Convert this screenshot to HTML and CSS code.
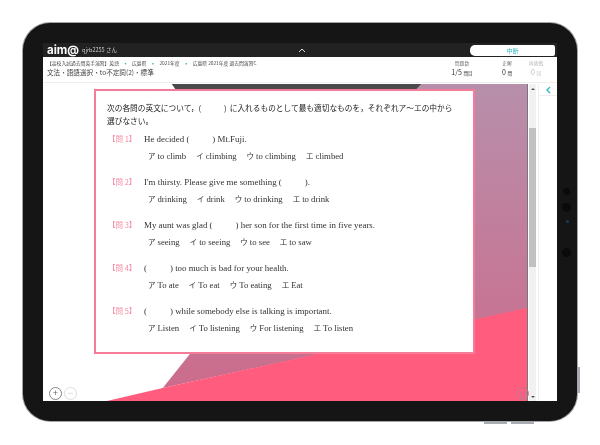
FILE: index.html
```html
<!DOCTYPE html>
<html lang="ja">
<head>
    <meta charset="UTF-8">
    <meta name="viewport" content="width=device-width, initial-scale=1.0">
    <title>aim@</title>
    <link rel="stylesheet" href="styles.css">
</head>
<body>
    <div class="tablet">
        <!-- Side buttons on the tablet edge -->
        <span class="btn-side"></span>
        <span class="btn-bottom btn-bottom-1"></span>
        <span class="btn-bottom btn-bottom-2"></span>
        <span class="dot dot-1"></span>
        <span class="dot dot-2"></span>
        <span class="dot dot-3"></span>
        <span class="dot dot-4"></span>

        <div class="screen">
            <!-- App bar -->
            <div class="appbar">
                <div class="logo">aim@</div>
                <div class="user">qjrb2255 さん</div>
                <svg class="caret" width="8" height="5" viewBox="0 0 8 5"><path d="M1 4 L4 1 L7 4" fill="none" stroke="#ddd" stroke-width="1"/></svg>
                <div class="stop">中断</div>
            </div>

            <!-- Title area -->
            <div class="info">
                <div class="info-left">
                    <div class="crumbs">【高校入試過去問英手演習】英語<i>▪</i>広島県<i>▪</i>2021年度<i>▪</i>広島県 2021年度 過去問演習C</div>
                    <div class="unit">文法・語語選択・to不定詞(2)・標準</div>
                </div>
                <div class="stat stat-1"><small>問題数</small><b>1/5 <em>問目</em></b></div>
                <div class="stat stat-2"><small>正解</small><b>0 <em>問</em></b></div>
                <div class="stat stat-3 stat-off"><small>再挑戦</small><b>0 <em>回</em></b></div>
            </div>

            <div class="main">
                <div class="canvas">
                    <svg class="bg" viewBox="0 0 485 317" preserveAspectRatio="none">
                        <defs>
                            <linearGradient id="mauve" x1="0" y1="0" x2="0" y2="1">
                                <stop offset="0" stop-color="#b78fab"/>
                                <stop offset="1" stop-color="#cc6c8c"/>
                            </linearGradient>
                        </defs>
                        <polygon points="135,0 485,0 485,225 120,304 148,269" fill="url(#mauve)"/>
                        <polygon points="129,0 379,0 360,20 143,20" fill="#4a4a4c"/>
                        <polygon points="64,317 120,304 485,224 485,317" fill="#ff5c7e"/>
                    </svg>
                    <div class="card">
                        <p class="intro">次の各問の英文について，<span class="intro-paren">(<span class="intro-blank"></span>)</span>に入れるものとして最も適切なものを，それぞれア～エの中から<br>選びなさい。</p>

                        <div class="q">
                            <div class="q-line"><span class="q-no">【問 1】</span>He decided (<span class="blank"></span>) Mt.Fuji.</div>
                            <div class="opts"><span><i>ア</i>to climb</span><span><i>イ</i>climbing</span><span><i>ウ</i>to climbing</span><span><i>エ</i>climbed</span></div>
                        </div>
                        <div class="q">
                            <div class="q-line"><span class="q-no">【問 2】</span>I'm thirsty. Please give me something (<span class="blank"></span>).</div>
                            <div class="opts"><span><i>ア</i>drinking</span><span><i>イ</i>drink</span><span><i>ウ</i>to drinking</span><span><i>エ</i>to drink</span></div>
                        </div>
                        <div class="q">
                            <div class="q-line"><span class="q-no">【問 3】</span>My aunt was glad (<span class="blank"></span>) her son for the first time in five years.</div>
                            <div class="opts"><span><i>ア</i>seeing</span><span><i>イ</i>to seeing</span><span><i>ウ</i>to see</span><span><i>エ</i>to saw</span></div>
                        </div>
                        <div class="q">
                            <div class="q-line"><span class="q-no">【問 4】</span>(<span class="blank"></span>) too much is bad for your health.</div>
                            <div class="opts"><span><i>ア</i>To ate</span><span><i>イ</i>To eat</span><span><i>ウ</i>To eating</span><span><i>エ</i>Eat</span></div>
                        </div>
                        <div class="q">
                            <div class="q-line"><span class="q-no">【問 5】</span>(<span class="blank"></span>) while somebody else is talking is important.</div>
                            <div class="opts"><span><i>ア</i>Listen</span><span><i>イ</i>To listening</span><span><i>ウ</i>For listening</span><span><i>エ</i>To listen</span></div>
                        </div>
                    </div>
                    <div class="zoom-btns">
                        <span class="zoom-btn">+</span>
                        <span class="zoom-btn zoom-off">−</span>
                    </div>
                    <span class="target"></span>
                </div>

                <div class="scrollbar">
                    <span class="arrow-up"></span>
                    <div class="thumb"></div>
                    <span class="arrow-down"></span>
                </div>

                <div class="rail">
                    <div class="rail-top">
                        <svg width="6" height="8" viewBox="0 0 6 8"><path d="M5 1 L2 4 L5 7" fill="none" stroke="#35b8c4" stroke-width="1.4"/></svg>
                    </div>
                </div>
            </div>
        </div>
    </div>
</body>
</html>
```

FILE: styles.css
```css
* {
    box-sizing: border-box;
}

body {
    margin: 0;
    width: 600px;
    height: 445px;
    overflow: hidden;
    background-color: #fff;
    font-family: "Noto Sans CJK JP", "Noto Sans", sans-serif;
    color: #333;
}

.tablet {
    position: relative;
    width: 554px;
    height: 398px;
    margin: 23px 0 0 23px;
    padding: 20px;
    background-color: #151515;
    border-radius: 27px;
    box-shadow: 0 0 0 1px #a4a6aa;
}

.btn-side {
    position: absolute;
    right: -3px;
    top: 344px;
    width: 2px;
    height: 26px;
    background-color: #a9acb2;
}

.btn-bottom {
    position: absolute;
    bottom: -3px;
    width: 23px;
    height: 2px;
    background-color: #a9acb2;
}

.btn-bottom-1 {
    left: 461px;
}

.btn-bottom-2 {
    left: 488px;
}

.dot {
    position: absolute;
    border-radius: 50%;
    background-color: #0a0a0a;
}

.dot-1 {
    top: 165px;
    left: 540px;
    width: 7px;
    height: 7px;
}

.dot-2 {
    top: 180px;
    left: 539px;
    width: 9px;
    height: 9px;
}

.dot-3 {
    top: 197px;
    left: 543px;
    width: 3px;
    height: 3px;
    background-color: #1d3a5c;
}

.dot-4 {
    top: 225px;
    left: 539px;
    width: 9px;
    height: 9px;
}

.screen {
    display: flex;
    flex-direction: column;
    width: 514px;
    height: 358px;
    background-color: #fff;
    filter: blur(0.4px);
}

/* App bar */
.appbar {
    display: flex;
    align-items: center;
    height: 14px;
    flex-shrink: 0;
    padding-left: 4px;
    background-color: #222;
    color: #fff;
}

.logo {
    width: 35px;
    font-family: Inter, "Liberation Sans", sans-serif;
    font-size: 11.5px;
    font-weight: bold;
    line-height: 14px;
}

.user {
    width: 214px;
    font-size: 5.5px;
    color: #ccc;
}

.caret {
    margin-left: 2px;
}

.stop {
    width: 85px;
    height: 11px;
    margin-left: 164px;
    background-color: #fff;
    border-radius: 5px 2px 2px 5px;
    color: #35b8c4;
    font-size: 6px;
    line-height: 11px;
    text-align: center;
}

/* Title area */
.info {
    display: flex;
    height: 26px;
    flex-shrink: 0;
    border-bottom: 1px solid #eee;
}

.info-left {
    flex-grow: 1;
    padding: 2px 0 0 4px;
}

.crumbs {
    font-size: 4.8px;
    line-height: 7px;
    color: #444;
}

.crumbs i {
    margin: 0 4px;
    font-style: normal;
    font-size: 5px;
    color: #35b8c4;
}

.unit {
    margin-top: 2px;
    font-size: 6.6px;
    line-height: 9px;
    color: #444;
}

.stat {
    display: flex;
    flex-direction: column;
    align-items: center;
    flex-shrink: 0;
    padding-top: 2px;
}

.stat-1 {
    width: 40px;
    margin-right: 11px;
}

.stat-2 {
    width: 28px;
}

.stat-3 {
    width: 30px;
    margin-right: 6px;
}

.stat small {
    font-size: 4.8px;
    line-height: 7px;
    color: #777;
}

.stat b {
    margin-top: 2px;
    font-size: 7px;
    line-height: 9px;
    font-weight: normal;
    color: #333;
}

.stat em {
    font-style: normal;
    font-size: 4.6px;
}

.stat-off b,
.stat-off small {
    color: #bbb;
}

/* Main area */
.main {
    display: flex;
    flex-grow: 1;
    min-height: 0;
    margin-top: 1px;
}

.canvas {
    position: relative;
    width: 485px;
    padding: 5px 0 0 51px;
    border-right: 1px solid #777;
}

.bg {
    position: absolute;
    left: 0;
    top: 0;
    width: 100%;
    height: 100%;
}

.card {
    position: relative;
    width: 381px;
    height: 265px;
    padding: 10px 12px 0 11px;
    background-color: #fff;
    border: 2px solid #f47c98;
}

.intro {
    margin: 0 0 4px 0;
    font-size: 7.7px;
    line-height: 13px;
    color: #222;
    white-space: nowrap;
}

.intro-blank {
    display: inline-block;
    width: 23px;
}

.intro-paren {
    margin-right: 3px;
}

.q {
    height: 43px;
}

.q-line {
    height: 16px;
    font-family: "Liberation Serif", serif;
    font-size: 8.9px;
    line-height: 16px;
    color: #333;
    white-space: nowrap;
}

.q-no {
    display: inline-block;
    width: 37px;
    padding-left: 1px;
    font-family: "Noto Sans CJK JP", sans-serif;
    font-size: 7.5px;
    color: #f58ca4;
}

.blank {
    display: inline-block;
    width: 23px;
}

.opts {
    display: flex;
    gap: 10px;
    height: 16px;
    padding-left: 41px;
    align-items: center;
    font-family: "Liberation Serif", serif;
    font-size: 8.7px;
    color: #333;
}

.opts i {
    margin-right: 2px;
    font-family: "Noto Sans CJK JP", sans-serif;
    font-style: normal;
    font-size: 7.5px;
}

.zoom-btns {
    position: absolute;
    left: 6px;
    bottom: 1px;
    display: flex;
    gap: 2px;
}

.zoom-btn {
    width: 13px;
    height: 13px;
    border: 1px solid #888;
    border-radius: 50%;
    background-color: #fff;
    color: #666;
    font-family: "Liberation Sans", sans-serif;
    font-size: 9px;
    line-height: 11px;
    text-align: center;
}

.zoom-off {
    border-color: #ddd;
    color: #ccc;
}

.target {
    position: absolute;
    right: -2px;
    bottom: 1px;
    width: 13px;
    height: 13px;
    border: 1px solid #b97a94;
    border-radius: 50%;
}

.target::after {
    content: "";
    display: block;
    width: 5px;
    height: 5px;
    margin: 3px;
    border: 1px solid #b97a94;
    border-radius: 50%;
}

/* Scroll bar */
.scrollbar {
    position: relative;
    width: 7px;
    margin: 0 2px 0 1px;
    background-color: #f1f1f1;
    padding-top: 44px;
}

.thumb {
    width: 100%;
    height: 139px;
    background-color: #c1c1c1;
}

.arrow-up {
    position: absolute;
    left: 2px;
    top: 4px;
    border-left: 2px solid transparent;
    border-right: 2px solid transparent;
    border-bottom: 2px solid #555;
}

.arrow-down {
    position: absolute;
    left: 2px;
    bottom: 3px;
    border-left: 2px solid transparent;
    border-right: 2px solid transparent;
    border-top: 2px solid #555;
}

/* Right rail */
.rail {
    flex-grow: 1;
    border-left: 1px solid #eee;
}

.rail-top {
    display: flex;
    align-items: center;
    justify-content: center;
    height: 12px;
    border-bottom: 1px solid #eee;
}
```
